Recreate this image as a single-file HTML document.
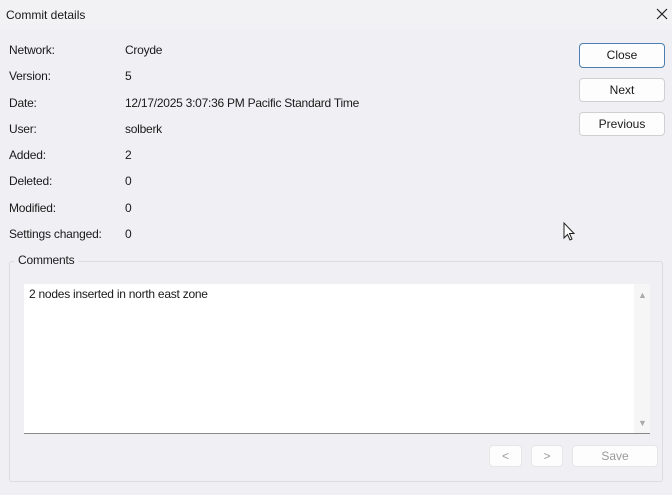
<!DOCTYPE html><html><head><style>
body{margin:0;width:672px;height:495px;background:#f0eff3;font-family:"Liberation Sans",sans-serif;font-size:12px;color:#1a1a1a;position:relative;overflow:hidden}
.a{position:absolute;white-space:nowrap}
.btn{position:absolute;background:#fdfdfd;border:1px solid #d0d0d0;border-radius:4px;text-align:center;box-sizing:border-box;font-size:12px}
</style></head><body>
<div class="a" style="left:0;top:0;width:672px;height:30px;background:#f2f1f4"></div>
<div class="a" style="left:6px;top:8px">Commit details</div>
<svg class="a" style="left:656px;top:8px" width="12" height="12" viewBox="0 0 12 12"><path d="M1 1L11 11M11 1L1 11" stroke="#222" stroke-width="1.2"/></svg>
<div class="a" style="left:9px;top:37px;line-height:26.3px;letter-spacing:-0.2px">Network:<br>Version:<br>Date:<br>User:<br>Added:<br>Deleted:<br>Modified:<br>Settings changed:</div>
<div class="a" style="left:125px;top:37px;line-height:26.3px;letter-spacing:-0.25px">Croyde<br>5<br>12/17/2025 3:07:36 PM Pacific Standard Time<br>solberk<br>2<br>0<br>0<br>0</div>
<div class="btn" style="left:579px;top:43px;width:86px;height:25px;line-height:23px;border:1px solid #4a7fb0">Close</div>
<div class="btn" style="left:579px;top:78px;width:86px;height:24px;line-height:22px">Next</div>
<div class="btn" style="left:579px;top:112px;width:86px;height:24px;line-height:22px">Previous</div>
<svg class="a" style="left:563px;top:222px" width="14" height="20" viewBox="0 0 14 20"><path d="M1 1 L1 16 L4.5 12.5 L7 18 L9 17 L6.5 11.5 L11 11.5 Z" fill="#fff" stroke="#222" stroke-width="1"/></svg>
<div class="a" style="left:9px;top:261px;width:654px;height:221px;border:1px solid #dcdbe0;border-radius:3px;box-sizing:border-box"></div>
<div class="a" style="left:14px;top:253px;background:#f0eff3;padding:0 4px;letter-spacing:-0.2px">Comments</div>
<div class="a" style="left:24px;top:284px;width:626px;height:150px;background:#fff;border-bottom:1px solid #888;box-sizing:border-box"></div>
<div class="a" style="left:634px;top:284px;width:16px;height:149px;background:#f6f6f6"></div>
<div class="a" style="left:638px;top:290px;font-size:9px;color:#aaa">▲</div>
<div class="a" style="left:638px;top:418px;font-size:9px;color:#aaa">▼</div>
<div class="a" style="left:29px;top:287px;letter-spacing:-0.25px">2 nodes inserted in north east zone</div>
<div class="btn" style="left:489px;top:445px;width:33px;height:22px;line-height:20px;color:#999;border-color:#e6e6e6">&lt;</div>
<div class="btn" style="left:531px;top:445px;width:32px;height:22px;line-height:20px;color:#999;border-color:#e6e6e6">&gt;</div>
<div class="btn" style="left:572px;top:445px;width:86px;height:22px;line-height:20px;color:#999;border-color:#e6e6e6">Save</div>
</body></html>
